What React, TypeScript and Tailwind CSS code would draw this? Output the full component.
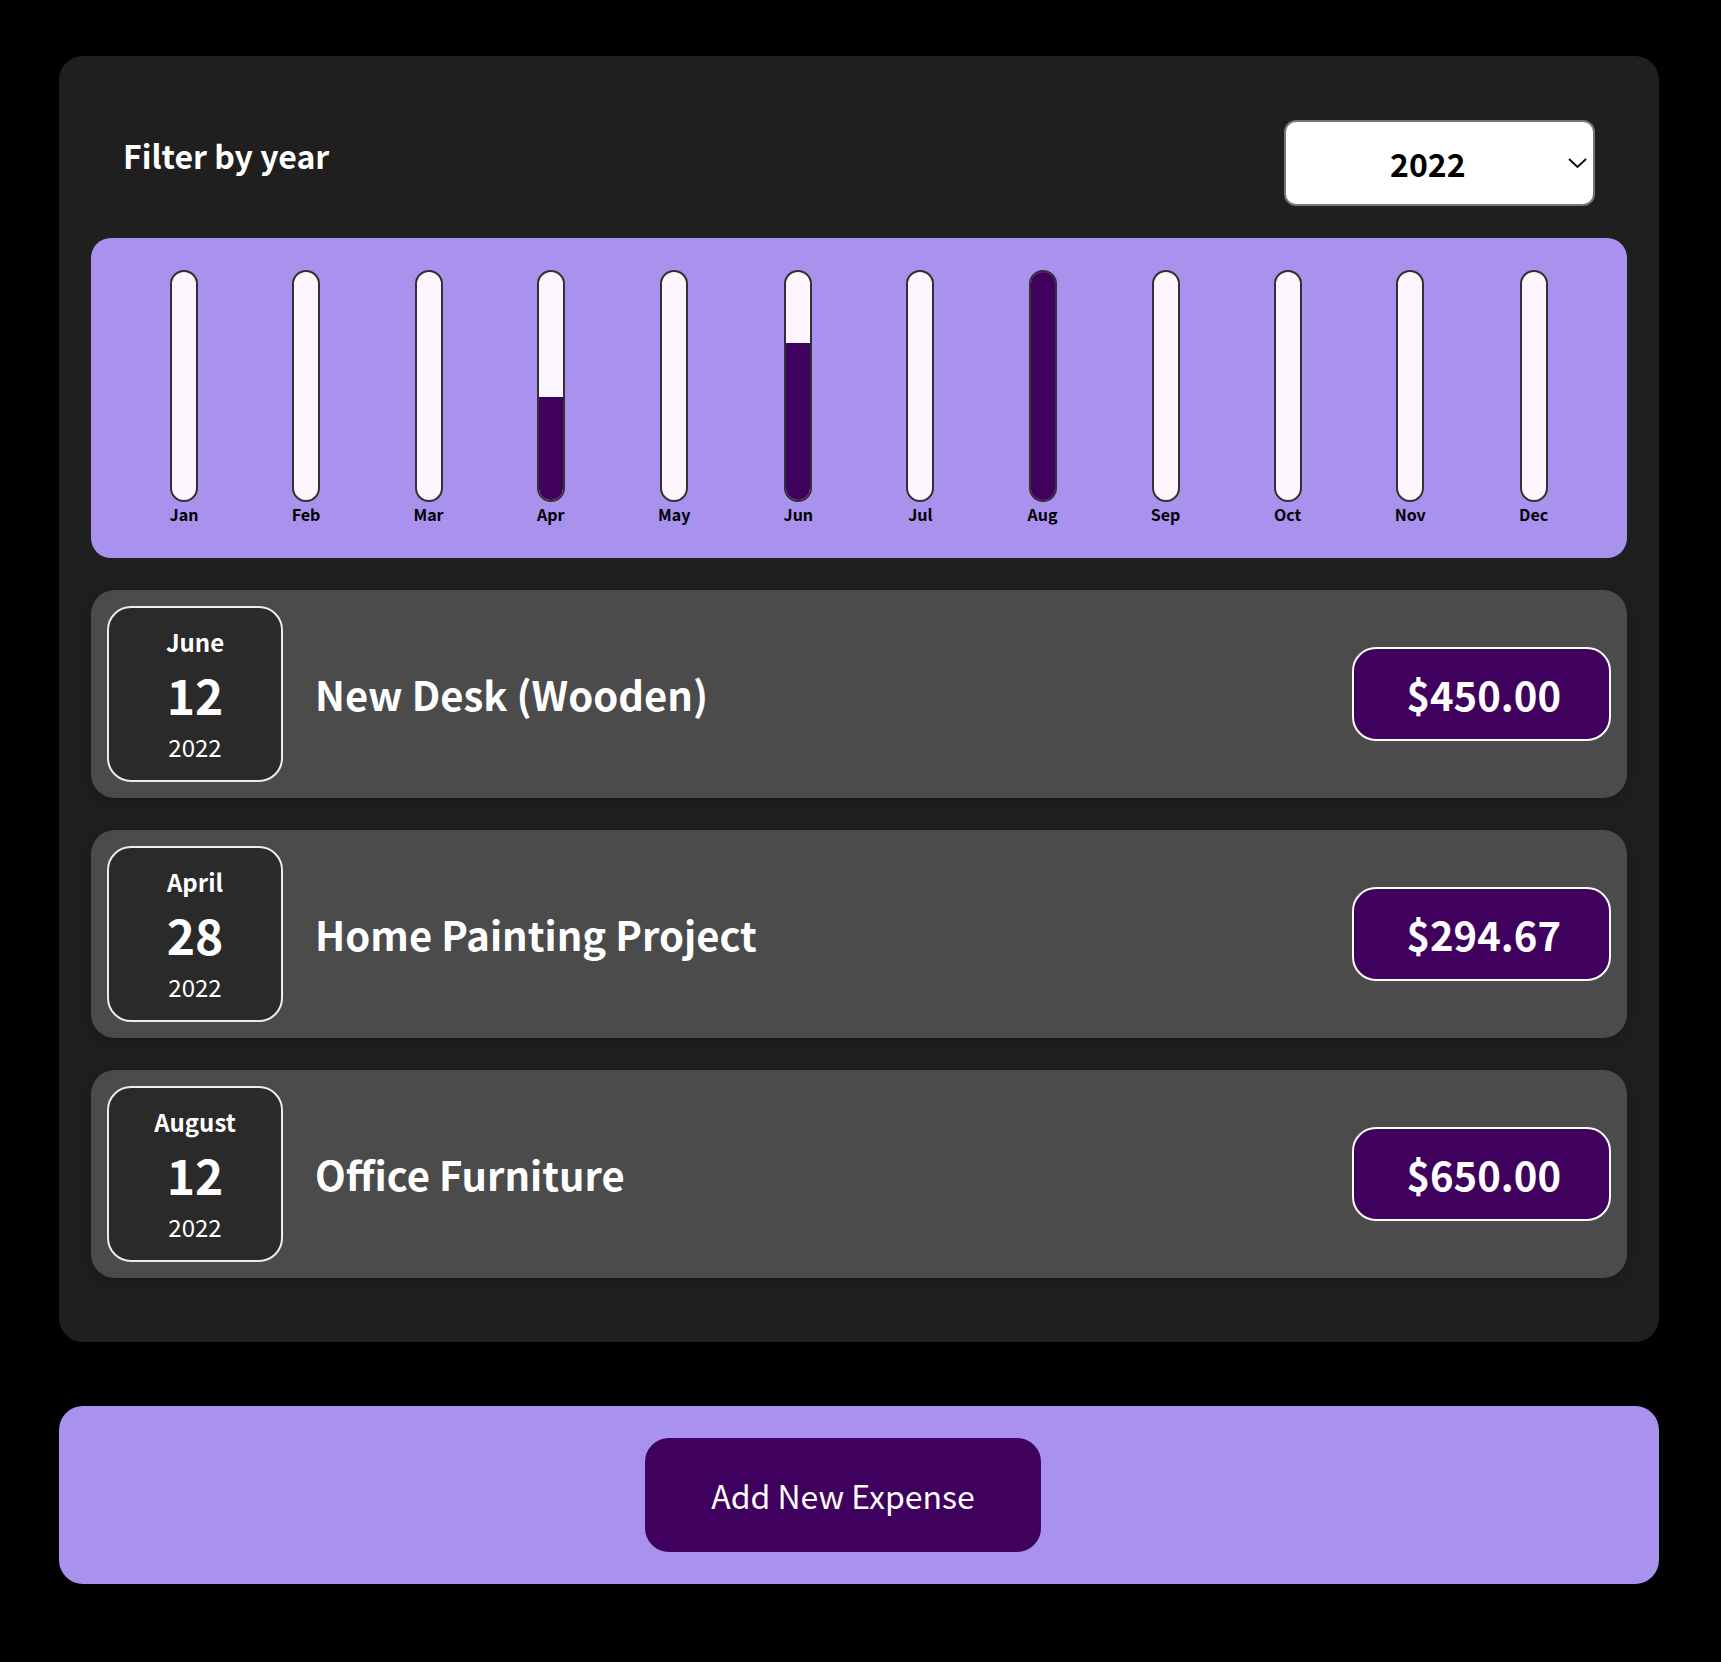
import React from "react";

type Expense = {
  id: string;
  title: string;
  amount: number;
  date: Date;
};

const expenses: Expense[] = [
  { id: "e1", title: "New Desk (Wooden)", amount: 450, date: new Date(2022, 5, 12) },
  { id: "e2", title: "Home Painting Project", amount: 294.67, date: new Date(2022, 3, 28) },
  { id: "e3", title: "Office Furniture", amount: 650, date: new Date(2022, 7, 12) },
];

const months = ["Jan", "Feb", "Mar", "Apr", "May", "Jun", "Jul", "Aug", "Sep", "Oct", "Nov", "Dec"];

function ExpensesFilter() {
  return (
    <div className="px-[32px] text-white">
      <div className="my-[32px] flex w-full items-center justify-between">
        <label className="mb-[16px] font-bold">Filter by year</label>
        <div className="relative flex h-[86px] w-[311px] items-center rounded-[12px] border-2 border-[#767676] bg-white pl-[104px] font-bold text-black">
          2022
          <svg
            className="absolute right-[6px] top-1/2 -translate-y-1/2"
            width="19"
            height="11"
            viewBox="0 0 19 11"
            fill="none"
          >
            <path d="M1 1.5l8.5 8 8.5-8" stroke="#111" strokeWidth="2" />
          </svg>
        </div>
      </div>
    </div>
  );
}

function ChartBar({ label, value, max }: { label: string; value: number; max: number }) {
  const fill = max > 0 ? Math.round((value / max) * 100) + "%" : "0%";
  return (
    <div className="flex h-full flex-col items-center">
      <div className="flex h-full w-[28px] flex-col justify-end overflow-hidden rounded-[24px] border-2 border-[#313131] bg-[#fcf7ff]">
        <div className="w-full bg-[#40005d]" style={{ height: fill }} />
      </div>
      <div className="text-center text-[16px] font-bold text-black">{label}</div>
    </div>
  );
}

function Chart() {
  const values = months.map((_, i) =>
    expenses.filter((e) => e.date.getMonth() === i).reduce((s, e) => s + e.amount, 0)
  );
  const max = Math.max(...values);
  return (
    <div className="flex h-[320px] justify-around rounded-[20px] bg-[#a892ee] p-[32px] text-center">
      {months.map((m, i) => (
        <ChartBar key={m} label={m} value={values[i]} max={max} />
      ))}
    </div>
  );
}

function ExpenseDate({ date }: { date: Date }) {
  const month = date.toLocaleString("en-US", { month: "long" });
  const day = date.toLocaleString("en-US", { day: "2-digit" });
  const year = date.getFullYear();
  return (
    <div className="flex h-[176px] w-[176px] shrink-0 flex-col items-center justify-center rounded-[24px] border-2 border-[#ececec] bg-[#2a2a2a] text-white">
      <div className="text-[24px] font-bold">{month}</div>
      <div className="text-[48px] font-bold">{day}</div>
      <div className="text-[24px]">{year}</div>
    </div>
  );
}

function ExpenseItem({ item }: { item: Expense }) {
  return (
    <li className="my-[32px] flex items-center justify-between rounded-[24px] bg-[#4b4b4b] p-[16px] shadow-[0_4px_16px_rgba(0,0,0,0.25)]">
      <ExpenseDate date={item.date} />
      <div className="flex flex-1 items-center justify-start">
        <h2 className="mx-[32px] flex-1 text-[40px] font-bold text-white">{item.title}</h2>
        <div className="rounded-[24px] border-2 border-white bg-[#40005d] py-[16px] pl-[52px] pr-[48px] text-[40px] font-bold text-white">
          ${item.amount.toFixed(2)}
        </div>
      </div>
    </li>
  );
}

export default function App() {
  return (
    <div className="min-h-screen bg-black pt-[56px] pb-[78px] font-['Noto_Sans_CJK_JP','Noto_Sans',sans-serif] text-[32px] leading-[normal]">
      <div className="ml-[59px] w-[1600px] rounded-[24px] bg-[#1f1f1f] p-[32px]">
        <ExpensesFilter />
        <Chart />
        <ul>
          {expenses.map((e) => (
            <ExpenseItem key={e.id} item={e} />
          ))}
        </ul>
      </div>

      <div className="ml-[59px] mt-[64px] flex w-[1600px] justify-center rounded-[24px] bg-[#a892ee] p-[32px] shadow-[0_2px_16px_rgba(0,0,0,0.25)]">
        <button className="mr-[32px] rounded-[24px] border-2 border-[#40005d] bg-[#40005d] px-[64px] py-[32px] text-white">
          Add New Expense
        </button>
      </div>
    </div>
  );
}
